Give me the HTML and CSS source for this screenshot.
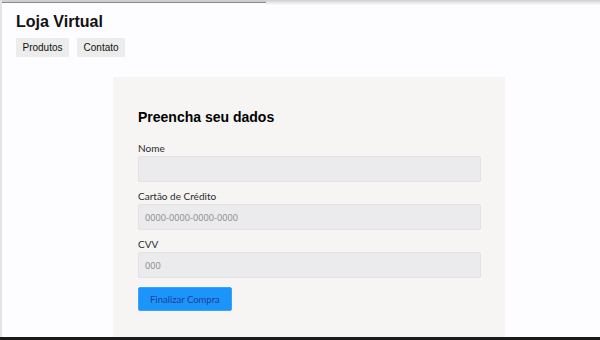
FILE: index.html
```html
<!DOCTYPE html>
<html lang="pt-BR">
<head>
    <meta charset="UTF-8">
    <meta name="viewport" content="width=device-width, initial-scale=1.0">
    <title>Loja Virtual - Checkout</title>
    <link rel="stylesheet" href="styles.css">
</head>
<body>
    <div class="window-bar">
        <div class="window-tab"></div>
        <div class="window-shade"></div>
    </div>

    <header class="site-header">
        <h1>Loja Virtual</h1>
        <nav class="site-nav">
            <button class="nav-btn">Produtos</button>
            <button class="nav-btn">Contato</button>
        </nav>
    </header>

    <main class="checkout">
        <h2>Preencha seu dados</h2>
        <form class="checkout-form">
            <div class="field">
                <label for="nome">Nome</label>
                <input type="text" id="nome">
            </div>
            <div class="field">
                <label for="cartao">Cartão de Crédito</label>
                <input type="text" id="cartao" placeholder="0000-0000-0000-0000">
            </div>
            <div class="field">
                <label for="cvv">CVV</label>
                <input type="text" id="cvv" placeholder="000">
            </div>
            <button type="button" class="buy-btn">Finalizar Compra</button>
        </form>
    </main>

    <div class="screen-edge"></div>
</body>
</html>
```

FILE: styles.css
```css
body {
    margin: 0;
    min-height: 100vh;
    background: #fdfcfe;
    border-left: 2px solid #e4e4e4;
    font-family: 'Liberation Sans', Arial, sans-serif;
    color: #111;
}

.window-bar {
    display: flex;
    height: 5px;
}

.window-tab {
    width: 264px;
    height: 2px;
    background: #cfcfcf;
    border-bottom: 1px solid #8a8a8a;
}

.window-shade {
    flex: 1;
    background: linear-gradient(#cfcfcf, #fdfcfe);
}

.site-header {
    padding: 7px 14px 0;
}

.site-header h1 {
    margin: 0;
    font-size: 16px;
    line-height: 20px;
}

.site-nav {
    display: flex;
    gap: 8px;
    margin-top: 6px;
}

.nav-btn {
    height: 19px;
    padding: 0 6.5px;
    border: none;
    border-radius: 1px;
    background: #ececec;
    font-family: 'Liberation Sans', Arial, sans-serif;
    font-size: 10px;
    color: #111;
}

.checkout {
    width: 343px;
    margin: 20px 0 0 111px;
    padding: 32px 24px 40px 25px;
    background: #f6f5f3;
}

.checkout h2 {
    margin: 0 0 17px;
    font-size: 14px;
    line-height: 16px;
    color: #000;
}

.field {
    margin-bottom: 8px;
}

.field label {
    display: block;
    margin-bottom: 1px;
    font-family: Lato, sans-serif;
    font-size: 10px;
    line-height: 13px;
    color: #2a2a2a;
}

.field input {
    box-sizing: border-box;
    display: block;
    width: 100%;
    height: 26px;
    padding: 0 6px;
    border: 1px solid #e2e1e3;
    border-radius: 2px;
    background: #ebeaec;
    font-family: 'Open Sans', sans-serif;
    font-size: 9.2px;
    color: #333;
}

.field input::placeholder {
    color: #8a8a8a;
}

.buy-btn {
    height: 24px;
    margin-top: 1px;
    padding: 0 11px;
    border: 1px solid #3aa2fb;
    border-radius: 2px;
    background: #1c95fb;
    font-family: Lato, sans-serif;
    font-size: 9.5px;
    color: #1d3d9b;
}

.screen-edge {
    position: fixed;
    left: 0;
    right: 0;
    bottom: 0;
    height: 3px;
    background: #1a1a1a;
}
```
